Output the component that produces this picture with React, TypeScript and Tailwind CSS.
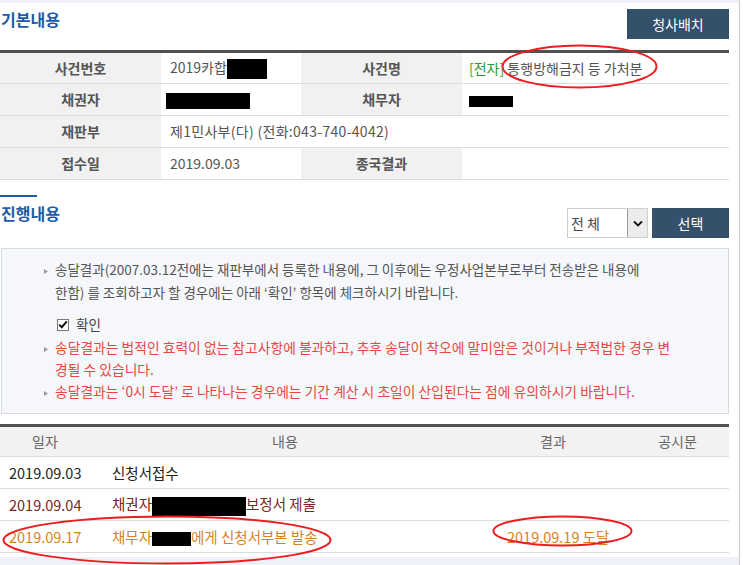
import React from "react";

const font = "font-['Noto_Sans_CJK_KR','Noto_Sans',sans-serif]";

function Redact({ w, h = 20 }: { w: number; h?: number }) {
  return <span className="inline-block bg-black align-middle" style={{ width: w, height: h }} />;
}

function Bullet() {
  return (
    <span className="w-[11px] shrink-0 pt-[11px]">
      <svg width="4" height="5" viewBox="0 0 4 5" className="block">
        <path d="M0 0 L4 2.5 L0 5 Z" fill="#9a9a9a" />
      </svg>
    </span>
  );
}

function Ellipse({ x, y, w, h }: { x: number; y: number; w: number; h: number }) {
  return (
    <svg className="absolute pointer-events-none" style={{ left: x, top: y }} width={w} height={h}>
      <ellipse cx={w / 2} cy={h / 2} rx={w / 2 - 1.5} ry={h / 2 - 1.5} fill="none" stroke="#ee1c1c" strokeWidth="2" />
    </svg>
  );
}

export default function App() {
  return (
    <div className={`relative w-[743px] h-[565px] overflow-hidden bg-white ${font} text-[14px]`}>
      <div className="w-[740px] h-full border-r border-[#c9ccd1]">
        <div className="h-[3px] bg-[#eef1f6]" />
        <div className="w-[729px]">
          {/* 기본내용 */}
          <div className="flex items-start justify-between pt-[6px] h-[47px]">
            <h2 className="text-[16px] leading-[20px] font-bold text-[#1d5ba7] pl-[1px]">기본내용</h2>
            <button className="w-[102px] h-[30px] bg-[#35506a] text-white text-[14px]">청사배치</button>
          </div>
          <table className="w-full table-fixed border-collapse border-t-[3px] border-[#505050]">
            <colgroup>
              <col className="w-[161px]" />
              <col className="w-[140px]" />
              <col className="w-[161px]" />
              <col />
            </colgroup>
            <tbody>
              <tr className="h-[32px] border-b border-[#dcdcdc]">
                <th className="bg-[#f1f1f1] font-bold text-[#555]">사건번호</th>
                <td className="pl-[9px] text-[#555]">
                  2019카합<Redact w={40} />
                </td>
                <th className="bg-[#f1f1f1] font-bold text-[#555]">사건명</th>
                <td className="pl-[7px] text-[#555]">
                  <span className="text-[#2b9a2b]">[전자]</span> 통행방해금지 등 가처분
                </td>
              </tr>
              <tr className="h-[32px] border-b border-[#dcdcdc]">
                <th className="bg-[#f1f1f1] font-bold text-[#555]">채권자</th>
                <td className="pl-[5px]">
                  <Redact w={84} h={16} />
                </td>
                <th className="bg-[#f1f1f1] font-bold text-[#555]">채무자</th>
                <td className="pl-[7px]">
                  <Redact w={44} h={11} />
                </td>
              </tr>
              <tr className="h-[32px] border-b border-[#dcdcdc]">
                <th className="bg-[#f1f1f1] font-bold text-[#555]">재판부</th>
                <td colSpan={3} className="pl-[9px] text-[#555] tracking-[0.3px]">
                  제1민사부(다) (전화:043-740-4042)
                </td>
              </tr>
              <tr className="h-[32px] border-b border-[#dcdcdc]">
                <th className="bg-[#f1f1f1] font-bold text-[#555]">접수일</th>
                <td className="pl-[9px] text-[#555]">2019.09.03</td>
                <th className="bg-[#f1f1f1] font-bold text-[#555]">종국결과</th>
                <td />
              </tr>
            </tbody>
          </table>

          {/* 진행내용 */}
          <div className="mt-[15px] w-[37px] h-[2px] bg-[#1d5ba7]" />
          <div className="flex items-start justify-between pt-[6px]">
            <h2 className="text-[16px] leading-[20px] font-bold text-[#1d5ba7] pl-[1px]">진행내용</h2>
            <div className="flex mt-[5px] gap-[4px]">
              <div className="flex w-[81px] h-[30px] border border-[#cfcfcf] bg-white">
                <span className="flex-1 pl-[3px] leading-[28px] text-[#444]">전 체</span>
                <span className="w-[20px] h-full border-l border-[#9a9a9a] bg-[#ececec] flex items-center justify-center">
                  <svg width="10" height="7" viewBox="0 0 10 7">
                    <path d="M1 1.5 L5 5.5 L9 1.5" fill="none" stroke="#111" strokeWidth="1.8" />
                  </svg>
                </span>
              </div>
              <button className="w-[77px] h-[30px] bg-[#35506a] text-white text-[14px]">선택</button>
            </div>
          </div>

          <div className="mt-[10px] ml-[1px] border border-[#d6dae3] bg-[#f6f7fb] pl-[42px] pr-[20px] pt-[9px] pb-[11px] leading-[23px] text-[13.5px]">
            <div className="flex text-[#555]">
              <Bullet />
              <p>
                송달결과(2007.03.12전에는 재판부에서 등록한 내용에, 그 이후에는 우정사업본부로부터 전송받은 내용에
                <br />
                한함) 를 조회하고자 할 경우에는 아래 ‘확인’ 항목에 체크하시기 바랍니다.
              </p>
            </div>
            <div className="flex items-center gap-[7px] pl-[13px] mt-[9px] h-[23px] text-[#444]">
              <span className="w-[12px] h-[12px] border border-[#777] bg-white flex items-center justify-center">
                <svg width="10" height="9" viewBox="0 0 10 9">
                  <path d="M1.2 4.6 L3.8 7.2 L8.8 1.4" fill="none" stroke="#111" strokeWidth="2" />
                </svg>
              </span>
              <span>확인</span>
            </div>
            <div className="flex text-[#e6493f] leading-[22px] text-[13.8px]">
              <Bullet />
              <p>
                송달결과는 법적인 효력이 없는 참고사항에 불과하고, 추후 송달이 착오에 말미암은 것이거나 부적법한 경우 변
                <br />
                경될 수 있습니다.
              </p>
            </div>
            <div className="flex text-[#e6493f] leading-[22px] text-[13.8px]">
              <Bullet />
              <p>송달결과는 ‘0시 도달’ 로 나타나는 경우에는 기간 계산 시 초일이 산입된다는 점에 유의하시기 바랍니다.</p>
            </div>
          </div>

          {/* 진행 테이블 */}
          <table className="mt-[10px] w-full table-fixed border-collapse border-t-[3px] border-[#505050]">
            <colgroup>
              <col className="w-[100px]" />
              <col className="w-[370px]" />
              <col className="w-[166px]" />
              <col />
            </colgroup>
            <thead>
              <tr className="h-[31px] bg-[#f2f2f2] border-b border-[#dcdcdc] text-[#666]">
                <th className="font-normal pr-[10px]">일자</th>
                <th className="font-normal">내용</th>
                <th className="font-normal">결과</th>
                <th className="font-normal pr-[10px]">공시문</th>
              </tr>
            </thead>
            <tbody className="text-[14.5px]">
              <tr className="h-[32px] border-b border-[#dcdcdc] text-[#222]">
                <td className="pl-[9px]">2019.09.03</td>
                <td className="pl-[12px]">신청서접수</td>
                <td />
                <td />
              </tr>
              <tr className="h-[32px] border-b border-[#dcdcdc] text-[#7b2222]">
                <td className="pl-[9px]">2019.09.04</td>
                <td className="pl-[12px]">
                  채권자<Redact w={94} h={19} />보정서 제출
                </td>
                <td />
                <td />
              </tr>
              <tr className="h-[32px] border-b border-[#dcdcdc] text-[#d8821f]">
                <td className="pl-[9px]">2019.09.17</td>
                <td className="pl-[12px]">
                  채무자<Redact w={39} h={14} />에게 신청서부본 발송
                </td>
                <td className="pl-[37px]">2019.09.19 도달</td>
                <td />
              </tr>
            </tbody>
          </table>
          <div className="h-[4px]" />
        </div>
        <div className="h-[10px] bg-[#eef2f8]" />
      </div>

      <Ellipse x={501} y={44} w={157} h={45} />
      <Ellipse x={2} y={515} w={330} h={50} />
      <Ellipse x={492} y={515} w={141} h={32} />
    </div>
  );
}
